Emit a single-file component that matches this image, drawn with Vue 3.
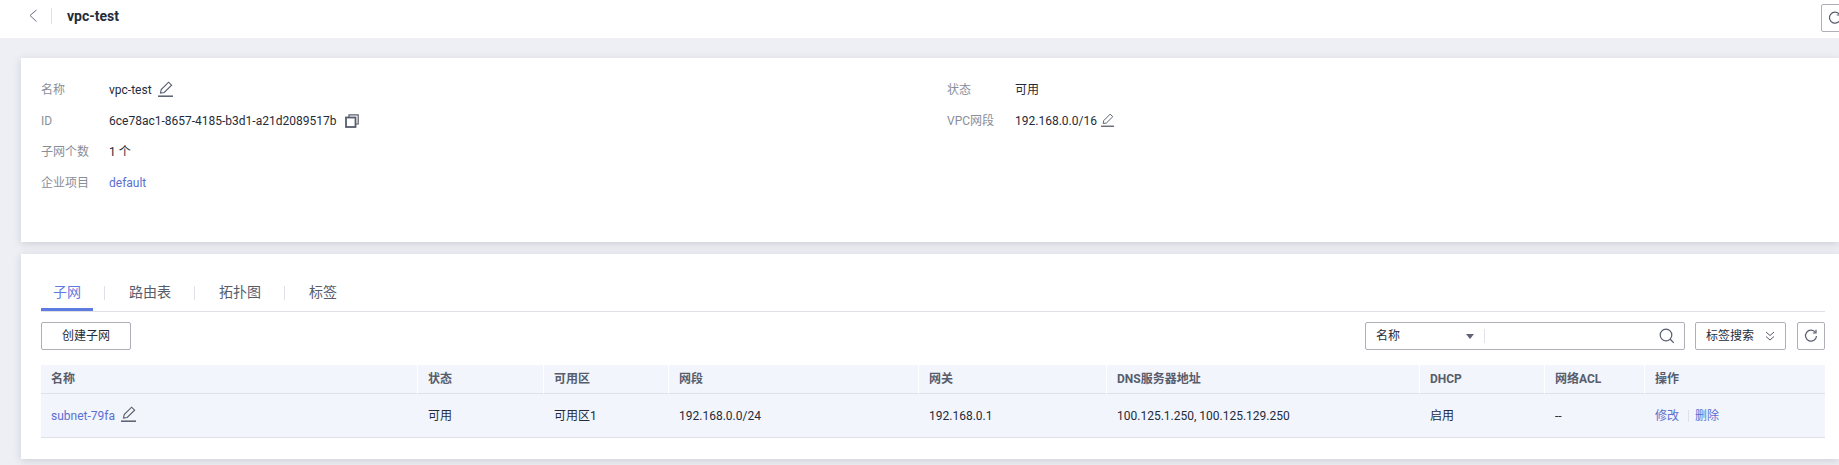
<script setup>
const infoLeft = [
  { label: '名称', value: 'vpc-test', icon: 'edit' },
  { label: 'ID', value: '6ce78ac1-8657-4185-b3d1-a21d2089517b', icon: 'copy' },
  { label: '子网个数', value: '1 个' },
  { label: '企业项目', value: 'default', link: true }
]
const infoRight = [
  { label: '状态', value: '可用' },
  { label: 'VPC网段', value: '192.168.0.0/16', icon: 'edit-small' }
]
const tabs = ['子网', '路由表', '拓扑图', '标签']
const columns = [
  { title: '名称', width: 377 },
  { title: '状态', width: 126 },
  { title: '可用区', width: 125 },
  { title: '网段', width: 250 },
  { title: '网关', width: 188 },
  { title: 'DNS服务器地址', width: 313 },
  { title: 'DHCP', width: 125 },
  { title: '网络ACL', width: 100 },
  { title: '操作', width: 180 }
]
const cells = ['可用', '可用区1', '192.168.0.0/24', '192.168.0.1', '100.125.1.250, 100.125.129.250', '启用', '--']
</script>

<template>
  <div class="page">
    <header class="topbar">
      <svg class="back" width="10" height="14" viewBox="0 0 10 14"><path d="M8.500 1 2 6.500l6.500 6" fill="none" stroke="#6b7080" stroke-width="1"/></svg>
      <span class="topsep"></span>
      <span class="title">vpc-test</span>
      <span class="corner-btn">
        <svg width="14" height="14" viewBox="0 0 14 14">
          <path d="M11.500 3.500A5.500 5.500 0 1 0 12.500 7" fill="none" stroke="#575d6c" stroke-width="1.200"/>
          <path d="M12 .8V4H8.800" fill="none" stroke="#575d6c" stroke-width="1.200"/>
        </svg>
      </span>
    </header>

    <section class="card info">
      <div class="info-col">
        <div v-for="row in infoLeft" :key="row.label" class="info-row">
          <span class="label">{{ row.label }}</span>
          <span class="value" :class="{ link: row.link }">{{ row.value }}</span>
          <svg v-if="row.icon === 'edit'" class="edit-icon" width="15" height="16" viewBox="0 0 15 16">
            <path d="M2.500 12 3.200 8.600 10.600 1.200l3 3-7.400 7.300Z" fill="none" stroke="#575d6c" stroke-width="1.100"/>
            <path d="M0 15.200h15" stroke="#575d6c" stroke-width="1.500"/>
          </svg>
          <svg v-if="row.icon === 'copy'" class="copy-icon" width="14" height="14" viewBox="0 0 14 14">
            <path d="M4 3V.8h9.200V10H11" fill="none" stroke="#575d6c" stroke-width="1.200"/>
            <rect x="1" y="3.500" width="9.500" height="9.500" fill="none" stroke="#575d6c" stroke-width="1.800"/>
          </svg>
        </div>
      </div>
      <div class="info-col">
        <div v-for="row in infoRight" :key="row.label" class="info-row">
          <span class="label">{{ row.label }}</span>
          <span class="value">{{ row.value }}</span>
          <svg v-if="row.icon" class="edit-small" width="13" height="14" viewBox="0 0 15 16">
            <path d="M2.500 12 3.200 8.600 10.600 1.200l3 3-7.400 7.300Z" fill="none" stroke="#575d6c" stroke-width="1.100"/>
            <path d="M0 15.200h15" stroke="#575d6c" stroke-width="1.500"/>
          </svg>
        </div>
      </div>
    </section>

    <section class="card list">
      <nav class="tabs">
        <template v-for="(tab, i) in tabs" :key="tab">
          <span v-if="i" class="tab-sep"></span>
          <span class="tab" :class="{ active: i === 0 }">{{ tab }}</span>
        </template>
      </nav>

      <div class="toolbar">
        <button class="btn create">创建子网</button>
        <div class="search">
          <span class="search-key">名称</span>
          <span class="caret"></span>
          <span class="search-sep"></span>
          <svg class="search-icon" width="16" height="16" viewBox="0 0 16 16">
            <circle cx="7" cy="7" r="5.800" fill="none" stroke="#575d6c" stroke-width="1.200"/>
            <path d="m11 11 3.800 3.800" stroke="#575d6c" stroke-width="1.200"/>
          </svg>
        </div>
        <button class="btn tag">
          <span>标签搜索</span>
          <svg width="10" height="10" viewBox="0 0 10 10"><path d="m1 1 4 3.500L9 1M1 5.500 5 9l4-3.500" fill="none" stroke="#575d6c"/></svg>
        </button>
        <button class="btn refresh">
          <svg width="14" height="14" viewBox="0 0 14 14">
            <path d="M11.500 3.500A5.500 5.500 0 1 0 12.500 7" fill="none" stroke="#575d6c" stroke-width="1.200"/>
            <path d="M12 .8V4H8.800" fill="none" stroke="#575d6c" stroke-width="1.200"/>
          </svg>
        </button>
      </div>

      <table class="table">
        <colgroup>
          <col v-for="c in columns" :key="c.title" :style="{ width: c.width + 'px' }" />
        </colgroup>
        <thead>
          <tr>
            <th v-for="c in columns" :key="c.title">{{ c.title }}</th>
          </tr>
        </thead>
        <tbody>
          <tr>
            <td>
              <span class="link">subnet-79fa</span>
              <svg class="edit-cell" width="15" height="16" viewBox="0 0 15 16">
                <path d="M2.500 12 3.200 8.600 10.600 1.200l3 3-7.400 7.300Z" fill="none" stroke="#575d6c" stroke-width="1.100"/>
                <path d="M0 15.200h15" stroke="#575d6c" stroke-width="1.500"/>
              </svg>
            </td>
            <td v-for="(cell, i) in cells" :key="i">{{ cell }}</td>
            <td>
              <span class="link">修改</span><span class="op-sep"></span><span class="link">删除</span>
            </td>
          </tr>
        </tbody>
      </table>
    </section>
  </div>
</template>

<style>
html, body { margin: 0; overflow: hidden; background: #eeeff4; }
</style>

<style scoped>
.page {
  width: 1839px;
  height: 465px;
  overflow: hidden;
  background: #eeeff4;
  font: 12px/18px Roboto, "Noto Sans CJK SC", sans-serif;
  color: #252b3a;
}
.topbar {
  height: 38px;
  background: #fff;
  display: flex;
  align-items: center;
  padding: 0 0 6px 28px;
  position: relative;
  box-sizing: border-box;
}
.back { display: block; }
.topsep { width: 1px; height: 16px; background: #dfe1e6; margin: 0 15px 0 13px; }
.title { font-size: 14px; font-weight: 700; color: #252b3a; }
.corner-btn {
  position: absolute;
  left: 1821px;
  top: 4px;
  width: 28px;
  height: 28px;
  border: 1px solid #adb0b8;
  border-radius: 2px;
  box-sizing: border-box;
  display: flex;
  align-items: center;
  justify-content: center;
}
.card {
  margin-left: 21px;
  background: #fff;
  box-shadow: 0 2px 8px rgba(60, 65, 85, 0.18);
  box-sizing: border-box;
}
.info {
  margin-top: 20px;
  height: 184px;
  padding: 16px 0 0 20px;
  display: grid;
  grid-template-columns: 906px 1fr;
}
.info-row { display: flex; align-items: center; height: 31px; }
.label { width: 68px; color: #8a8e99; flex: none; }
.link { color: #5a6fd0; }
.edit-icon { margin-left: 6px; margin-top: -2px; }
.copy-icon { margin-left: 9px; }
.edit-small { margin-left: 4px; margin-top: -2px; }
.list {
  margin-top: 12px;
  height: 205px;
  padding: 20px 14px 0 20px;
}
.tabs {
  display: flex;
  align-items: center;
  border-bottom: 1px solid #dfe1e6;
  height: 37px;
}
.tab {
  font-size: 14px;
  color: #575d6c;
  padding: 0 12px;
  height: 37px;
  line-height: 36px;
  box-sizing: border-box;
}
.tab.active { color: #5e7ce0; border-bottom: 3px solid #5e7ce0; }
.tab-sep { width: 1px; height: 14px; background: #dfe1e6; margin: 0 12px 0 11px; }
.toolbar { display: flex; align-items: stretch; margin-top: 10px; height: 28px; }
.btn {
  font: inherit;
  color: #252b3a;
  background: #fff;
  border: 1px solid #adb0b8;
  border-radius: 2px;
  padding: 0;
  box-sizing: border-box;
  display: flex;
  align-items: center;
  justify-content: center;
}
.create { width: 90px; margin-right: auto; }
.search {
  width: 320px;
  border: 1px solid #adb0b8;
  border-radius: 2px;
  box-sizing: border-box;
  display: flex;
  align-items: center;
  padding-left: 10px;
}
.search-key { width: 90px; }
.caret {
  width: 0;
  height: 0;
  border-left: 4px solid transparent;
  border-right: 4px solid transparent;
  border-top: 5px solid #5e6473;
}
.search-sep { width: 1px; height: 14px; background: #dfe1e6; margin-left: 10px; }
.search-icon { margin-left: auto; margin-right: 9px; }
.tag { width: 91px; margin-left: 10px; gap: 11px; }
.refresh { width: 28px; margin-left: 11px; }
.table {
  margin-top: 15px;
  width: 1784px;
  border-collapse: separate;
  border-spacing: 0;
  table-layout: fixed;
  background: #f2f5fc;
}
th, td { padding: 0 10px; text-align: left; box-sizing: border-box; }
th {
  height: 29px;
  font-weight: 700;
  color: #575d6c;
  border-bottom: 1px solid #dfe1e6;
  border-right: 1px solid #fff;
}
th:last-child { border-right: 0; }
td { height: 44px; border-bottom: 1px solid #dfe1e6; }
.edit-cell { margin-left: 6px; vertical-align: -2px; }
.op-sep {
  display: inline-block;
  width: 1px;
  height: 12px;
  background: #dfe1e6;
  margin: 0 6px 0 9px;
  vertical-align: -2px;
}
</style>
